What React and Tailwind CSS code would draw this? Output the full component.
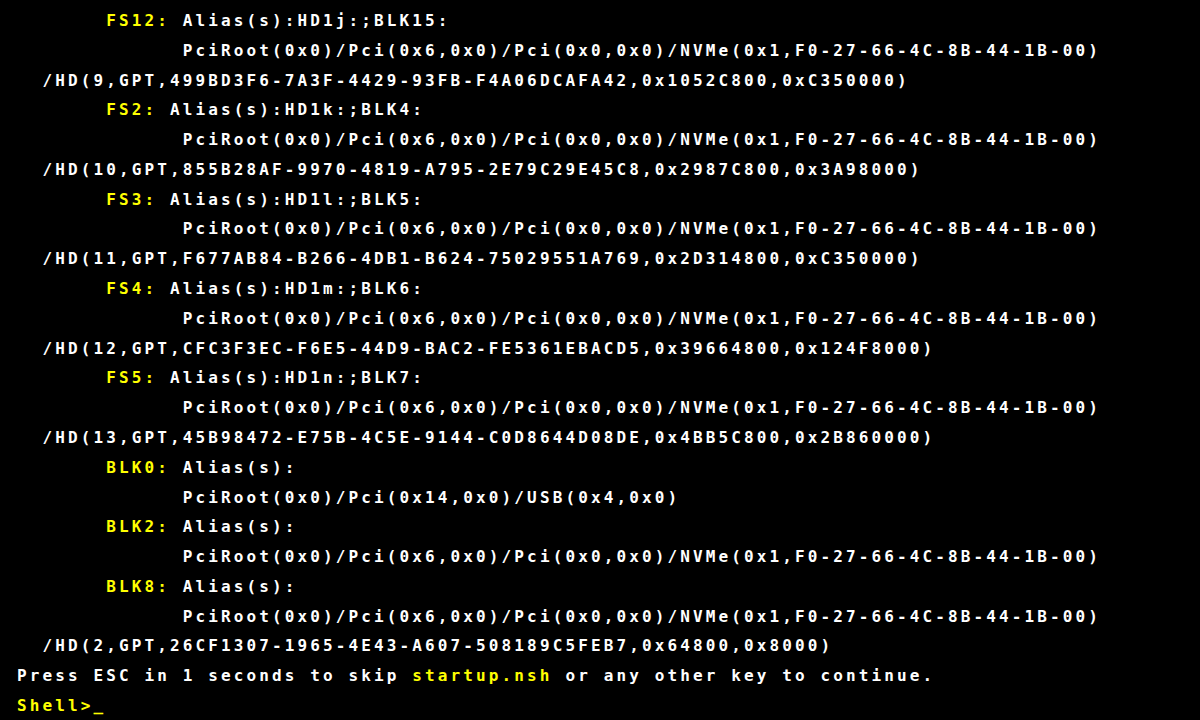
const NVME = 'PciRoot(0x0)/Pci(0x6,0x0)/Pci(0x0,0x0)/NVMe(0x1,F0-27-66-4C-8B-44-1B-00)';

// each line: [indent, yellow label, white text]
const LINES = [
  [7, 'FS12:', ' Alias(s):HD1j:;BLK15:'],
  [13, '', NVME],
  [2, '', '/HD(9,GPT,499BD3F6-7A3F-4429-93FB-F4A06DCAFA42,0x1052C800,0xC350000)'],
  [7, 'FS2:', ' Alias(s):HD1k:;BLK4:'],
  [13, '', NVME],
  [2, '', '/HD(10,GPT,855B28AF-9970-4819-A795-2E79C29E45C8,0x2987C800,0x3A98000)'],
  [7, 'FS3:', ' Alias(s):HD1l:;BLK5:'],
  [13, '', NVME],
  [2, '', '/HD(11,GPT,F677AB84-B266-4DB1-B624-75029551A769,0x2D314800,0xC350000)'],
  [7, 'FS4:', ' Alias(s):HD1m:;BLK6:'],
  [13, '', NVME],
  [2, '', '/HD(12,GPT,CFC3F3EC-F6E5-44D9-BAC2-FE5361EBACD5,0x39664800,0x124F8000)'],
  [7, 'FS5:', ' Alias(s):HD1n:;BLK7:'],
  [13, '', NVME],
  [2, '', '/HD(13,GPT,45B98472-E75B-4C5E-9144-C0D8644D08DE,0x4BB5C800,0x2B860000)'],
  [7, 'BLK0:', ' Alias(s):'],
  [13, '', 'PciRoot(0x0)/Pci(0x14,0x0)/USB(0x4,0x0)'],
  [7, 'BLK2:', ' Alias(s):'],
  [13, '', NVME],
  [7, 'BLK8:', ' Alias(s):'],
  [13, '', NVME],
  [2, '', '/HD(2,GPT,26CF1307-1965-4E43-A607-508189C5FEB7,0x64800,0x8000)'],
];

export default function App() {
  return (
    <div className="w-[1200px] h-[720px] overflow-hidden bg-black pl-[17px] pt-[6px] font-['DejaVu_Sans_Mono',monospace] font-bold text-[16px] leading-[29.78px] tracking-[3.12px] text-white whitespace-pre">
      {LINES.map(([indent, label, text], i) => (
        <div key={i}>
          {' '.repeat(indent)}
          {label && <span className="text-[#ffff00]">{label}</span>}
          {text}
        </div>
      ))}
      <div>
        Press ESC in 1 seconds to skip <span className="text-[#ffff00]">startup.nsh</span> or any other key to continue.
      </div>
      <div className="text-[#ffff00]">Shell&gt;_</div>
    </div>
  );
}
